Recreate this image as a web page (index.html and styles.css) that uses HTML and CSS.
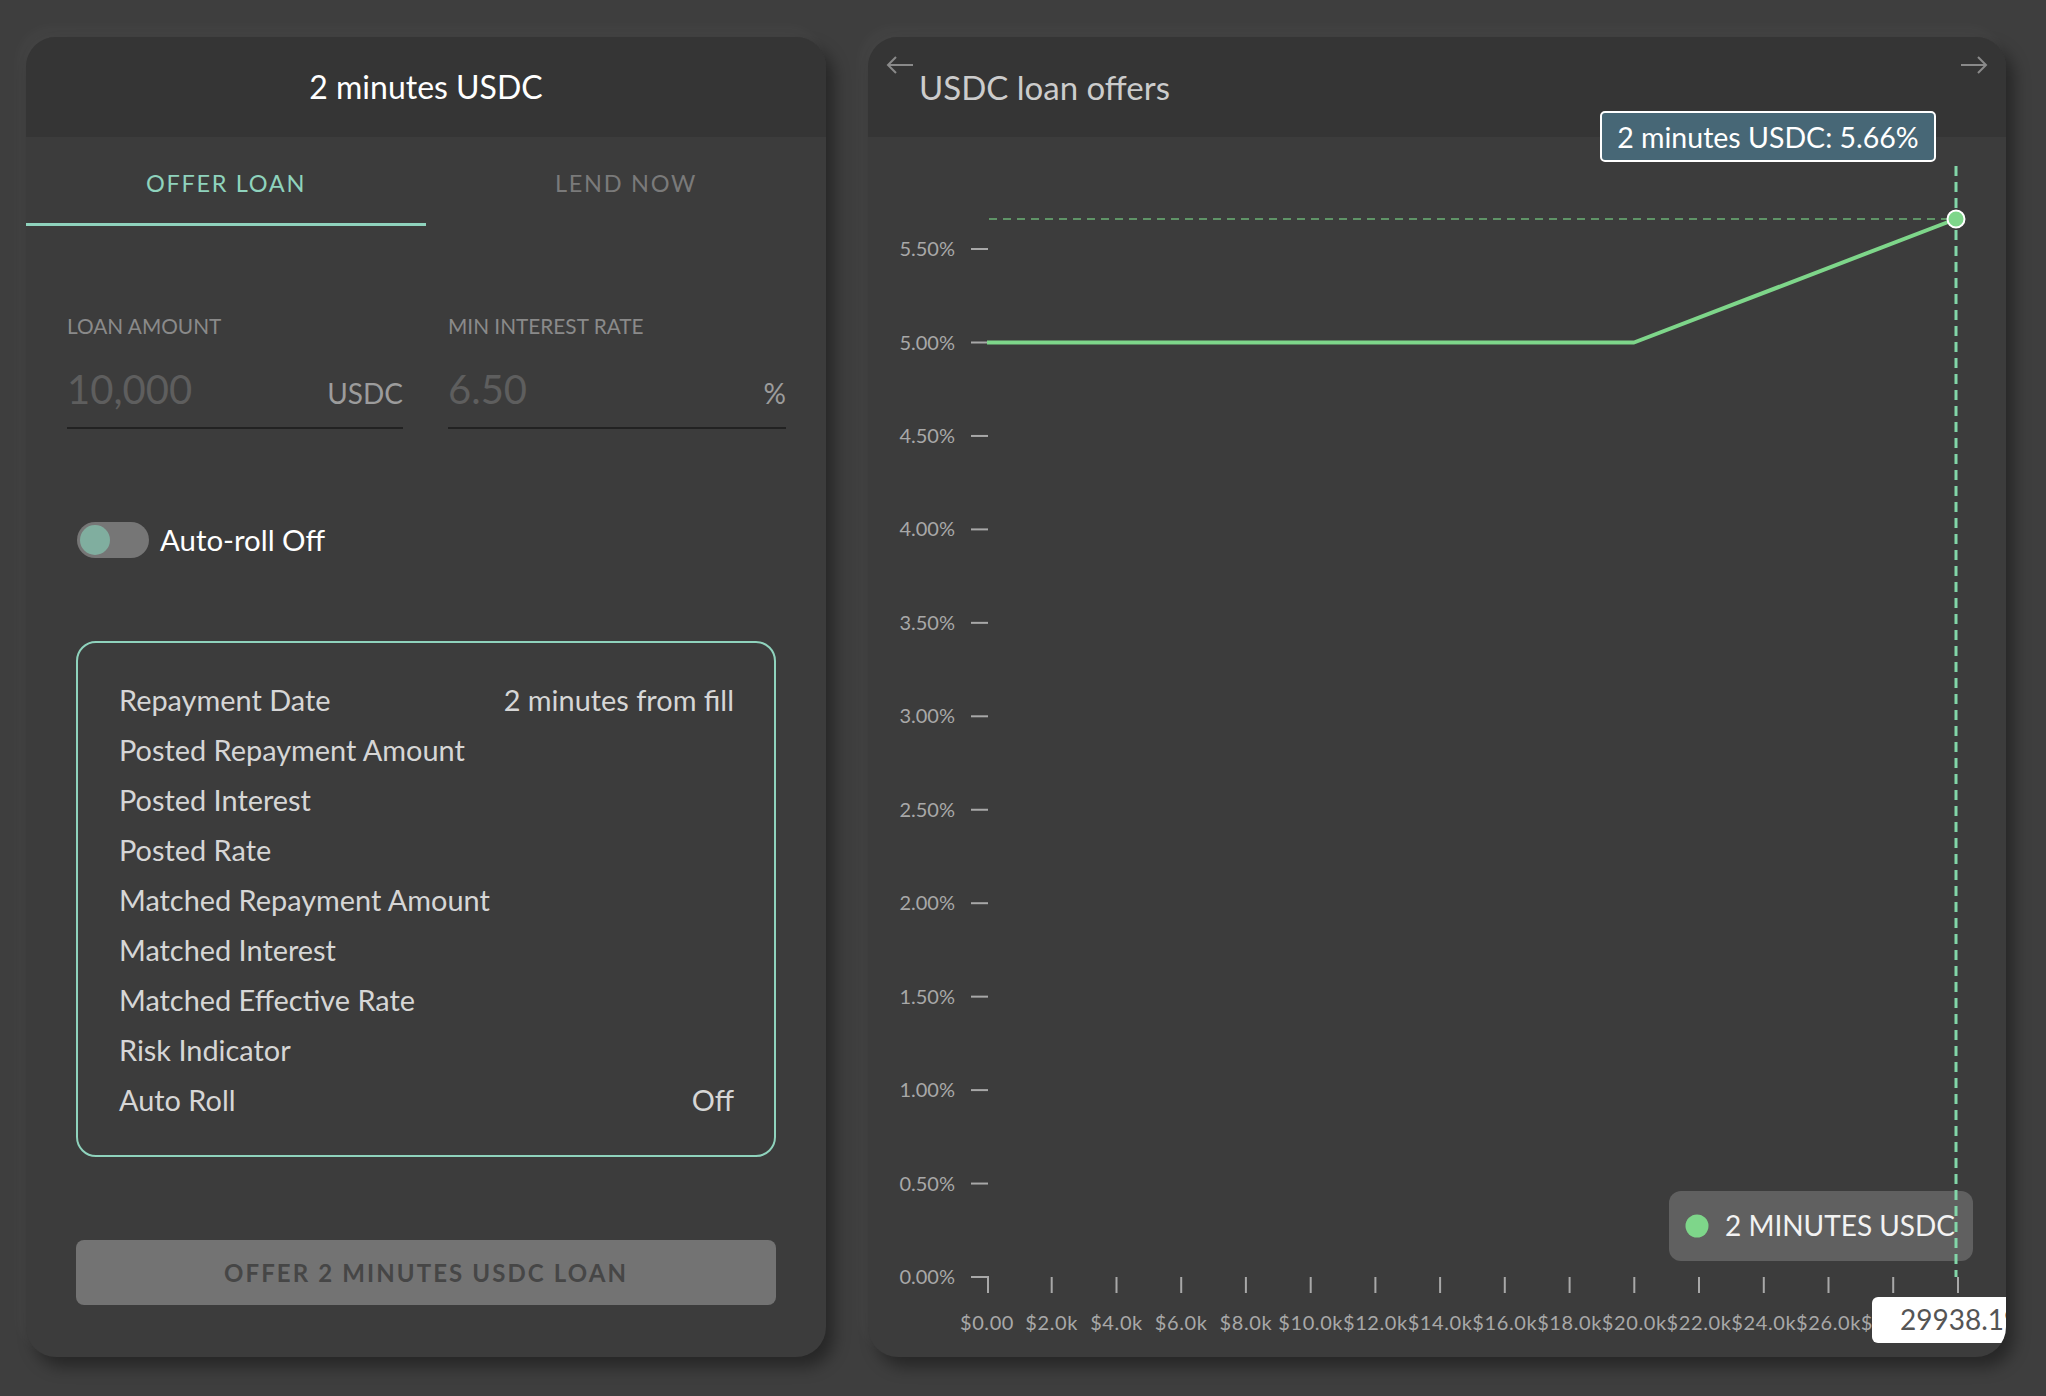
FILE: index.html
```html
<!DOCTYPE html>
<html>
<head>
<meta charset="utf-8">
<title>USDC loans</title>
<link rel="stylesheet" href="styles.css">
</head>
<body>
<main class="page">
  <section class="card loan-card">
    <header class="card-head">
      <h1 class="card-title">2 minutes USDC</h1>
    </header>
    <nav class="tabs">
      <div class="tab tab-active">OFFER LOAN</div>
      <div class="tab">LEND NOW</div>
    </nav>
    <div class="form-row">
      <div class="field">
        <div class="field-label">LOAN AMOUNT</div>
        <div class="field-input"><span class="field-value">10,000</span><span class="field-unit">USDC</span></div>
      </div>
      <div class="field">
        <div class="field-label">MIN INTEREST RATE</div>
        <div class="field-input"><span class="field-value">6.50</span><span class="field-unit">%</span></div>
      </div>
    </div>
    <div class="lower">
      <div class="toggle-row">
        <span class="toggle"><span class="knob"></span></span>
        <span class="toggle-label">Auto-roll Off</span>
      </div>
      <div class="details">
        <div class="detail-row"><span>Repayment Date</span><span>2 minutes from fill</span></div>
        <div class="detail-row"><span>Posted Repayment Amount</span><span></span></div>
        <div class="detail-row"><span>Posted Interest</span><span></span></div>
        <div class="detail-row"><span>Posted Rate</span><span></span></div>
        <div class="detail-row"><span>Matched Repayment Amount</span><span></span></div>
        <div class="detail-row"><span>Matched Interest</span><span></span></div>
        <div class="detail-row"><span>Matched Effective Rate</span><span></span></div>
        <div class="detail-row"><span>Risk Indicator</span><span></span></div>
        <div class="detail-row"><span>Auto Roll</span><span>Off</span></div>
      </div>
      <button class="submit">OFFER 2 MINUTES USDC LOAN</button>
    </div>
  </section>

  <section class="card chart-card">
    <header class="card-head chart-head">
      <svg class="nav-arrow nav-left" width="28" height="20" viewBox="0 0 28 20"><path d="M27 10H2M10 2L2 10L10 18" fill="none" stroke="#8a8a8a" stroke-width="2"/></svg>
      <h2 class="chart-title">USDC loan offers</h2>
      <svg class="nav-arrow nav-right" width="28" height="20" viewBox="0 0 28 20"><path d="M1 10H26M18 2L26 10L18 18" fill="none" stroke="#8a8a8a" stroke-width="2"/></svg>
    </header>
    <div class="tooltip">2 minutes USDC: 5.66%</div>
    <svg class="chart" width="1138" height="1220" viewBox="0 0 1138 1220">
      <g class="y-labels" font-size="20" fill="#a8a8a8" text-anchor="end">
        <text x="87" y="1140" dy="0.35em">0.00%</text>
        <text x="87" y="1046.55" dy="0.35em">0.50%</text>
        <text x="87" y="953.1" dy="0.35em">1.00%</text>
        <text x="87" y="859.65" dy="0.35em">1.50%</text>
        <text x="87" y="766.2" dy="0.35em">2.00%</text>
        <text x="87" y="672.75" dy="0.35em">2.50%</text>
        <text x="87" y="579.3" dy="0.35em">3.00%</text>
        <text x="87" y="485.85" dy="0.35em">3.50%</text>
        <text x="87" y="392.4" dy="0.35em">4.00%</text>
        <text x="87" y="298.95" dy="0.35em">4.50%</text>
        <text x="87" y="205.5" dy="0.35em">5.00%</text>
        <text x="87" y="112.05" dy="0.35em">5.50%</text>
      </g>
      <g stroke="#a8a8a8" stroke-width="2">
        <line x1="103" x2="120" y1="1140" y2="1140"/>
        <line x1="103" x2="120" y1="1046.55" y2="1046.55"/>
        <line x1="103" x2="120" y1="953.1" y2="953.1"/>
        <line x1="103" x2="120" y1="859.65" y2="859.65"/>
        <line x1="103" x2="120" y1="766.2" y2="766.2"/>
        <line x1="103" x2="120" y1="672.75" y2="672.75"/>
        <line x1="103" x2="120" y1="579.3" y2="579.3"/>
        <line x1="103" x2="120" y1="485.85" y2="485.85"/>
        <line x1="103" x2="120" y1="392.4" y2="392.4"/>
        <line x1="103" x2="120" y1="298.95" y2="298.95"/>
        <line x1="103" x2="120" y1="205.5" y2="205.5"/>
        <line x1="103" x2="120" y1="112.05" y2="112.05"/>
      </g>
      <g stroke="#a8a8a8" stroke-width="2">
        <line x1="120" x2="120" y1="1139" y2="1156"/>
        <line x1="183.7" x2="183.7" y1="1140" y2="1156"/>
        <line x1="248.5" x2="248.5" y1="1140" y2="1156"/>
        <line x1="313.2" x2="313.2" y1="1140" y2="1156"/>
        <line x1="377.9" x2="377.9" y1="1140" y2="1156"/>
        <line x1="442.7" x2="442.7" y1="1140" y2="1156"/>
        <line x1="507.4" x2="507.4" y1="1140" y2="1156"/>
        <line x1="572.1" x2="572.1" y1="1140" y2="1156"/>
        <line x1="636.8" x2="636.8" y1="1140" y2="1156"/>
        <line x1="701.6" x2="701.6" y1="1140" y2="1156"/>
        <line x1="766.3" x2="766.3" y1="1140" y2="1156"/>
        <line x1="831" x2="831" y1="1140" y2="1156"/>
        <line x1="895.8" x2="895.8" y1="1140" y2="1156"/>
        <line x1="960.5" x2="960.5" y1="1140" y2="1156"/>
        <line x1="1025.2" x2="1025.2" y1="1140" y2="1156"/>
        <line x1="1090" x2="1090" y1="1140" y2="1156"/>
      </g>
      <g class="x-labels" font-size="20" fill="#a8a8a8" text-anchor="middle">
        <text x="119" y="1186" dy="0.35em">$0.00</text>
        <text x="183.7" y="1186" dy="0.35em">$2.0k</text>
        <text x="248.5" y="1186" dy="0.35em">$4.0k</text>
        <text x="313.2" y="1186" dy="0.35em">$6.0k</text>
        <text x="377.9" y="1186" dy="0.35em">$8.0k</text>
        <text x="442.7" y="1186" dy="0.35em">$10.0k</text>
        <text x="507.4" y="1186" dy="0.35em">$12.0k</text>
        <text x="572.1" y="1186" dy="0.35em">$14.0k</text>
        <text x="636.8" y="1186" dy="0.35em">$16.0k</text>
        <text x="701.6" y="1186" dy="0.35em">$18.0k</text>
        <text x="766.3" y="1186" dy="0.35em">$20.0k</text>
        <text x="831" y="1186" dy="0.35em">$22.0k</text>
        <text x="895.8" y="1186" dy="0.35em">$24.0k</text>
        <text x="960.5" y="1186" dy="0.35em">$26.0k</text>
        <text x="1025.2" y="1186" dy="0.35em">$28.0k</text>
      </g>
      <rect x="1004" y="1160" width="160" height="46" rx="6" fill="#ffffff"/>
      <text x="1032" y="1183" dy="0.35em" font-size="28" fill="#555555">29938.19</text>

      <rect x="801" y="1054" width="304" height="70" rx="12" fill="#606060"/>
      <circle cx="829" cy="1089" r="11.5" fill="#7ed68a"/>
      <text x="857" y="1089" dy="0.35em" font-size="28" fill="#f2f2f2">2 MINUTES USDC</text>

      <line x1="121" x2="1088" y1="82" y2="82" stroke="#5f9467" stroke-width="2" stroke-dasharray="8 6"/>
      <polyline points="119,205.5 766,205.5 1088,82" fill="none" stroke="#7ed68a" stroke-width="4" stroke-linejoin="round"/>
      <line x1="1088" x2="1088" y1="29" y2="1140" stroke="#82d6a8" stroke-width="3" stroke-dasharray="10 6"/>
      <circle cx="1088" cy="82" r="8.5" fill="#7ed68a" stroke="#ffffff" stroke-width="2"/>
    </svg>
  </section>
</main>
</body>
</html>
```

FILE: styles.css
```css
html, body {
  margin: 0;
  padding: 0;
}

body {
  background: #3e3e3e;
  font-family: Lato, "Open Sans", "Liberation Sans", sans-serif;
  color: #ffffff;
  width: 2046px;
  height: 1396px;
  overflow: hidden;
}

.page {
  display: flex;
  gap: 42px;
  padding: 37px 40px 0 26px;
  align-items: flex-start;
}

.card {
  position: relative;
  height: 1320px;
  background: #3c3c3c;
  border-radius: 30px;
  overflow: hidden;
  box-shadow: 8px 10px 16px rgba(0, 0, 0, 0.38), -6px -8px 16px rgba(255, 255, 255, 0.035);
}

.loan-card {
  width: 800px;
  flex: none;
}

.chart-card {
  flex: 1;
}

.card-head {
  height: 100px;
  background: #353535;
  display: flex;
  align-items: center;
  justify-content: center;
}

.card-title {
  margin: 0;
  font-size: 32px;
  font-weight: 400;
  color: #ffffff;
  line-height: 40px;
}

.tabs {
  display: flex;
}

.tab {
  flex: 1;
  height: 89px;
  box-sizing: border-box;
  padding-top: 5px;
  border-bottom: 3px solid transparent;
  display: flex;
  align-items: center;
  justify-content: center;
  font-size: 23.5px;
  letter-spacing: 1.7px;
  color: #7a7a7a;
}

.tab-active {
  color: #8fd3bd;
  border-bottom-color: #8fd3bd;
}

.form-row {
  display: grid;
  grid-template-columns: 336px 338px;
  column-gap: 45px;
  padding: 88px 40px 0 41px;
}

.field-label {
  font-size: 20.8px;
  line-height: 24px;
  color: #8a8a8a;
}

.field-input {
  margin-top: 27px;
  display: flex;
  justify-content: space-between;
  align-items: baseline;
  padding-bottom: 14px;
  border-bottom: 2px solid #222222;
}

.field-value {
  font-size: 40px;
  line-height: 48px;
  color: #5e5e5e;
}

.field-unit {
  font-size: 28px;
  color: #9c9c9c;
}

.lower {
  padding: 93px 50px 0 50px;
}

.toggle-row {
  display: flex;
  align-items: center;
  gap: 11px;
  margin-left: 1px;
}

.toggle {
  width: 72px;
  height: 36px;
  border-radius: 18px;
  background: #767676;
  display: flex;
  align-items: center;
  padding-left: 3px;
  box-sizing: border-box;
}

.knob {
  width: 30px;
  height: 30px;
  border-radius: 50%;
  background: #80ae9f;
}

.toggle-label {
  font-size: 29.4px;
  line-height: 36px;
  color: #ffffff;
}

.details {
  margin-top: 83px;
  border: 2px solid #8fd3bd;
  border-radius: 20px;
  padding: 32px 40px 30px 41px;
}

.detail-row {
  display: flex;
  justify-content: space-between;
  font-size: 28.9px;
  line-height: 50px;
  color: #d6d6d6;
}

.submit {
  display: block;
  width: 100%;
  margin-top: 83px;
  height: 65px;
  border: none;
  border-radius: 8px;
  background: #737373;
  color: #464646;
  font-family: Lato, "Open Sans", "Liberation Sans", sans-serif;
  font-weight: 700;
  font-size: 24px;
  letter-spacing: 2.1px;
}

.chart-head {
  position: relative;
  justify-content: flex-start;
  padding-left: 51px;
}

.chart-title {
  margin: 0;
  font-size: 33px;
  font-weight: 400;
  line-height: 40px;
  color: #cccccc;
}

.nav-arrow {
  position: absolute;
  top: 18px;
}

.nav-left {
  left: 18px;
}

.nav-right {
  right: 18px;
}

.tooltip {
  position: absolute;
  left: 732px;
  top: 74px;
  width: 336px;
  height: 51px;
  box-sizing: border-box;
  background: #476776;
  border: 2px solid #ffffff;
  border-radius: 5px;
  display: flex;
  align-items: center;
  justify-content: center;
  font-size: 28.5px;
  color: #ffffff;
  z-index: 2;
}

.chart {
  display: block;
  font-family: Lato, "Open Sans", "Liberation Sans", sans-serif;
}

.x-labels {
  letter-spacing: 0.6px;
}
```
